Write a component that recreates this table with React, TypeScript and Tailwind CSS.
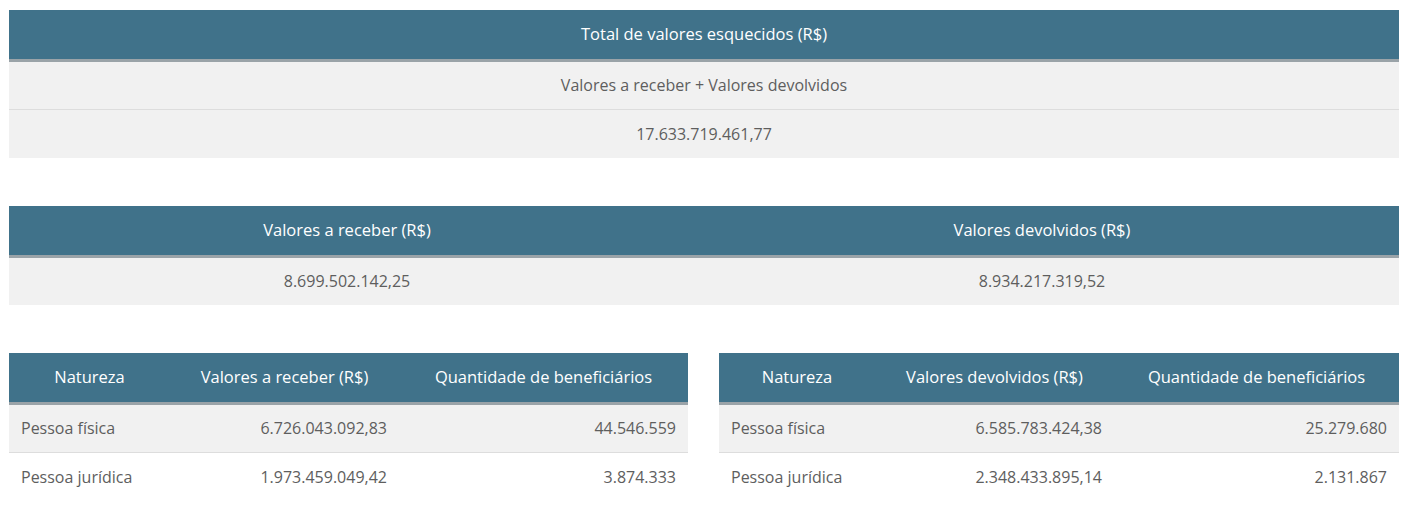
const FONT = "font-['Open_Sans',_'Noto_Sans',_sans-serif]";

const th = 'h-[50px] border-b-[3px] border-[#9aa3a8] bg-[#40728a] px-3 pt-[1px] text-center text-[16.5px] font-medium text-white';
const td = 'h-[49px] px-3 text-[16px] font-normal text-[#5e5e5e]';

function ResumoTable({
  cols,
  rows,
}: {
  cols: { title: string; w: string; align: string }[];
  rows: string[][];
}) {
  return (
    <table className="w-full table-fixed border-collapse">
      <colgroup>
        {cols.map((c) => (
          <col key={c.title} className={c.w} />
        ))}
      </colgroup>
      <thead>
        <tr>
          {cols.map((c) => (
            <th key={c.title} className={th}>
              {c.title}
            </th>
          ))}
        </tr>
      </thead>
      <tbody>
        {rows.map((r, i) => (
          <tr key={i} className={i === 0 ? 'border-b border-[#dddddd] bg-[#f1f1f1]' : 'bg-white'}>
            {r.map((v, j) => (
              <td key={j} className={`${td} ${cols[j].align}`}>
                {v}
              </td>
            ))}
          </tr>
        ))}
      </tbody>
    </table>
  );
}

export default function App() {
  return (
    <div className={`${FONT} bg-white pl-[9px] pr-[11px] pt-[10px] pb-4`}>
      {/* total */}
      <table className="w-full border-collapse">
        <thead>
          <tr>
            <th className={th}>Total de valores esquecidos (R$)</th>
          </tr>
        </thead>
        <tbody>
          <tr className="border-b border-[#dddddd] bg-[#f1f1f1]">
            <td className={`${td} text-center`}>Valores a receber + Valores devolvidos</td>
          </tr>
          <tr className="bg-[#f1f1f1]">
            <td className={`${td} text-center`}>17.633.719.461,77</td>
          </tr>
        </tbody>
      </table>

      {/* a receber x devolvidos */}
      <table className="mt-[48px] w-full table-fixed border-collapse">
        <colgroup>
          <col className="w-[676px]" />
          <col />
        </colgroup>
        <thead>
          <tr>
            <th className={th}>Valores a receber (R$)</th>
            <th className={th}>Valores devolvidos (R$)</th>
          </tr>
        </thead>
        <tbody>
          <tr className="bg-[#f1f1f1]">
            <td className={`${td} text-center`}>8.699.502.142,25</td>
            <td className={`${td} text-center`}>8.934.217.319,52</td>
          </tr>
        </tbody>
      </table>

      <div className="mt-[48px] flex gap-[31px]">
        <div className="w-[679px]">
          <ResumoTable
            cols={[
              { title: 'Natureza', w: 'w-[161px]', align: 'text-left' },
              { title: 'Valores a receber (R$)', w: 'w-[229px]', align: 'text-right' },
              { title: 'Quantidade de beneficiários', w: 'w-auto', align: 'text-right' },
            ]}
            rows={[
              ['Pessoa física', '6.726.043.092,83', '44.546.559'],
              ['Pessoa jurídica', '1.973.459.049,42', '3.874.333'],
            ]}
          />
        </div>
        <div className="flex-1">
          <ResumoTable
            cols={[
              { title: 'Natureza', w: 'w-[156px]', align: 'text-left' },
              { title: 'Valores devolvidos (R$)', w: 'w-[239px]', align: 'text-right' },
              { title: 'Quantidade de beneficiários', w: 'w-auto', align: 'text-right' },
            ]}
            rows={[
              ['Pessoa física', '6.585.783.424,38', '25.279.680'],
              ['Pessoa jurídica', '2.348.433.895,14', '2.131.867'],
            ]}
          />
        </div>
      </div>
    </div>
  );
}
